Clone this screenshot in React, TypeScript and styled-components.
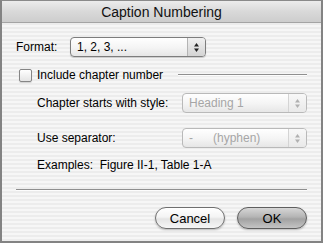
import React from "react";
import styled, { createGlobalStyle } from "styled-components";

const GlobalStyle = createGlobalStyle`
  html, body {
    margin: 0;
    padding: 0;
    background: #ffffff;
  }
  body {
    font-family: "Liberation Sans", Arial, sans-serif;
    font-size: 12px;
    color: #000;
  }
`;

const Window = styled.div`
  box-sizing: border-box;
  width: 323px;
  height: 243px;
  display: flex;
  flex-direction: column;
  border: 2px solid #838383;
  border-top: 1px solid #8a8a8a;
  background: repeating-linear-gradient(
    to bottom,
    #f6f6f6 0px,
    #f6f6f6 2px,
    #ececec 2px,
    #ececec 4px
  );
`;

const TitleBar = styled.div`
  height: 21px;
  flex: none;
  display: flex;
  align-items: center;
  justify-content: center;
  background: linear-gradient(to bottom, #ececec 0%, #d9d9d9 50%, #cdcdcd 100%);
  border-bottom: 1px solid #a4a4a4;
  font-size: 14px;
  color: #111;
`;

const Body = styled.div`
  flex: 1;
  display: flex;
  flex-direction: column;
  padding: 14px 14px 0 14px;
`;

const Row = styled.div<{ $top: number }>`
  display: flex;
  align-items: center;
  margin-top: ${(p) => p.$top}px;
`;

const Label = styled.span<{ $width?: number }>`
  width: ${(p) => (p.$width ? `${p.$width}px` : "auto")};
  flex: none;
  white-space: pre;
`;

const Popup = styled.div<{ $width: number; $disabled?: boolean }>`
  box-sizing: border-box;
  width: ${(p) => p.$width}px;
  height: 20px;
  display: flex;
  align-items: center;
  border: 1px solid ${(p) => (p.$disabled ? "#b9b9b9" : "#7d7d7d")};
  border-radius: 4px;
  background: linear-gradient(to bottom, #ffffff 0%, #f4f4f4 55%, #e6e6e6 100%);
  box-shadow: ${(p) => (p.$disabled ? "none" : "0 1px 1px rgba(0,0,0,0.18)")};
  color: ${(p) => (p.$disabled ? "#a6a6a6" : "#000")};
  overflow: hidden;
`;

const PopupText = styled.span`
  flex: 1;
  padding-left: 6px;
  white-space: pre;
`;

const PopupArrows = styled.div<{ $disabled?: boolean }>`
  width: 17px;
  height: 100%;
  display: flex;
  align-items: center;
  justify-content: center;
  border-left: 1px solid ${(p) => (p.$disabled ? "#d4d4d4" : "#b4b4b4")};
  background: ${(p) =>
    p.$disabled
      ? "linear-gradient(to bottom, #f8f8f8, #e9e9e9)"
      : "linear-gradient(to bottom, #f0f0f0, #d4d4d4)"};
`;

const Checkbox = styled.div`
  box-sizing: border-box;
  width: 13px;
  height: 13px;
  border: 1px solid #858585;
  border-radius: 2px;
  background: linear-gradient(to bottom, #ffffff, #e4e4e4);
  box-shadow: 0 1px 1px rgba(0, 0, 0, 0.15);
  margin: 0 5px 0 3px;
`;

const Rule = styled.div`
  flex: 1;
  height: 1px;
  background: #8f8f8f;
  border-bottom: 1px solid #fdfdfd;
`;

const Indent = styled.div`
  display: flex;
  flex-direction: column;
  padding-left: 21px;
`;

const Divider = styled.div`
  height: 1px;
  margin-top: 17px;
  background: #8f8f8f;
  border-bottom: 1px solid #fdfdfd;
`;

const ButtonRow = styled.div`
  display: flex;
  justify-content: flex-end;
  gap: 12px;
  margin-top: 16px;
`;

const Button = styled.div<{ $default?: boolean }>`
  box-sizing: border-box;
  width: 70px;
  height: 22px;
  display: flex;
  align-items: center;
  justify-content: center;
  border-radius: 11px;
  font-size: 13px;
  border: 1px solid ${(p) => (p.$default ? "#5e5e5e" : "#6f6f6f")};
  background: ${(p) =>
    p.$default
      ? "linear-gradient(to bottom, #d6d6d6 0%, #b4b4b4 45%, #a2a2a2 55%, #c4c4c4 100%)"
      : "linear-gradient(to bottom, #ffffff 0%, #f4f4f4 45%, #e4e4e4 55%, #f6f6f6 100%)"};
  box-shadow: 0 1px 2px rgba(0, 0, 0, 0.25);
`;

const Arrows = ({ disabled }: { disabled?: boolean }) => (
  <svg width="7" height="11" viewBox="0 0 7 11">
    <path d="M3.5 1 L6 4.5 L1 4.5 Z" fill={disabled ? "#b0b0b0" : "#222"} />
    <path d="M3.5 10 L6 6.5 L1 6.5 Z" fill={disabled ? "#b0b0b0" : "#222"} />
  </svg>
);

const App = () => {
  return (
    <>
      <GlobalStyle />
      <Window>
        <TitleBar>Caption Numbering</TitleBar>
        <Body>
          <Row $top={0}>
            <Label $width={54}>Format:</Label>
            <Popup $width={136}>
              <PopupText>1, 2, 3, ...</PopupText>
              <PopupArrows>
                <Arrows />
              </PopupArrows>
            </Popup>
          </Row>
          <Row $top={11}>
            <Checkbox />
            <Label>Include chapter number</Label>
            <Rule style={{ marginLeft: 15 }} />
          </Row>
          <Indent>
            <Row $top={11}>
              <Label $width={145}>Chapter starts with style:</Label>
              <Popup $width={125} $disabled>
                <PopupText>Heading 1</PopupText>
                <PopupArrows $disabled>
                  <Arrows disabled />
                </PopupArrows>
              </Popup>
            </Row>
            <Row $top={15}>
              <Label $width={145}>Use separator:</Label>
              <Popup $width={125} $disabled>
                <PopupText>{"-      (hyphen)"}</PopupText>
                <PopupArrows $disabled>
                  <Arrows disabled />
                </PopupArrows>
              </Popup>
            </Row>
            <Row $top={10}>
              <Label>{"Examples:  Figure II-1, Table 1-A"}</Label>
            </Row>
          </Indent>
          <Divider />
          <ButtonRow>
            <Button>Cancel</Button>
            <Button $default>OK</Button>
          </ButtonRow>
        </Body>
      </Window>
    </>
  );
};

export default App;
